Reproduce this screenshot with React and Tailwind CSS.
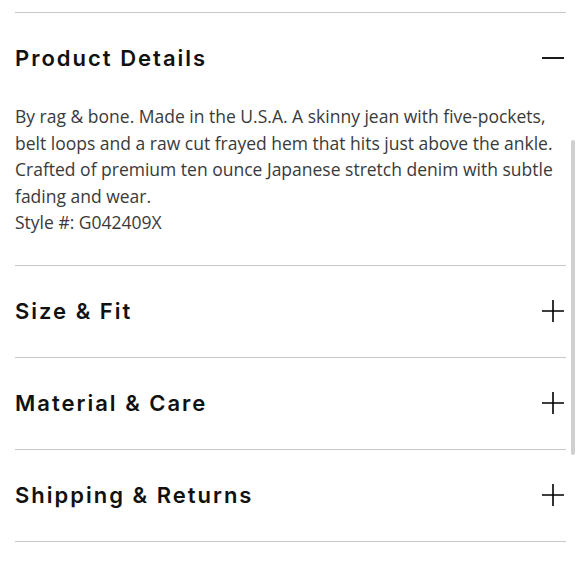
import React from "react";

const sections = [
  { title: "Size & Fit" },
  { title: "Material & Care" },
  { title: "Shipping & Returns" },
];

const detailLines = [
  "By rag & bone. Made in the U.S.A. A skinny jean with five-pockets,",
  "belt loops and a raw cut frayed hem that hits just above the ankle.",
  "Crafted of premium ten ounce Japanese stretch denim with subtle",
  "fading and wear.",
  "Style #: G042409X",
];

const PlusIcon = () => (
  <svg width="22" height="22" viewBox="0 0 22 22" className="text-black">
    <path d="M11 0v22M0 11h22" stroke="currentColor" strokeWidth="1.6" />
  </svg>
);

const MinusIcon = () => (
  <svg width="22" height="22" viewBox="0 0 22 22" className="text-black">
    <path d="M0 11h22" stroke="currentColor" strokeWidth="1.8" />
  </svg>
);

const Heading = ({ children }) => (
  <h2 className="text-[22px] font-semibold text-[#111] tracking-[2px] font-['Inter',sans-serif]">
    {children}
  </h2>
);

export default function App() {
  return (
    <div className="relative w-[580px] h-[580px] bg-white overflow-hidden">
      <div className="pt-[12px] pl-[15px] pr-[14px]">
        {/* --- Product Details (open) --- */}
        <section className="border-t border-[#c8c8c8]">
          <div className="h-[90px] flex items-center justify-between pr-[2px]">
            <Heading>Product Details</Heading>
            <MinusIcon />
          </div>
          <div className="pb-[29px] text-[17.5px] leading-[26.5px] text-[#3a3a3a] font-['Open_Sans',sans-serif] whitespace-nowrap">
            {detailLines.map((line) => (
              <p key={line}>{line}</p>
            ))}
          </div>
        </section>

        {sections.map((s) => (
          <section key={s.title} className="border-t border-[#c8c8c8]">
            <div className="h-[91px] flex items-center justify-between pr-[2px]">
              <Heading>{s.title}</Heading>
              <PlusIcon />
            </div>
          </section>
        ))}
        <div className="border-t border-[#c8c8c8]" />
      </div>

      {/* scrollbar thumb */}
      <div className="absolute left-[571px] top-[140px] w-[4px] h-[315px] rounded-full bg-[#cfcfcf]" />
    </div>
  );
}
